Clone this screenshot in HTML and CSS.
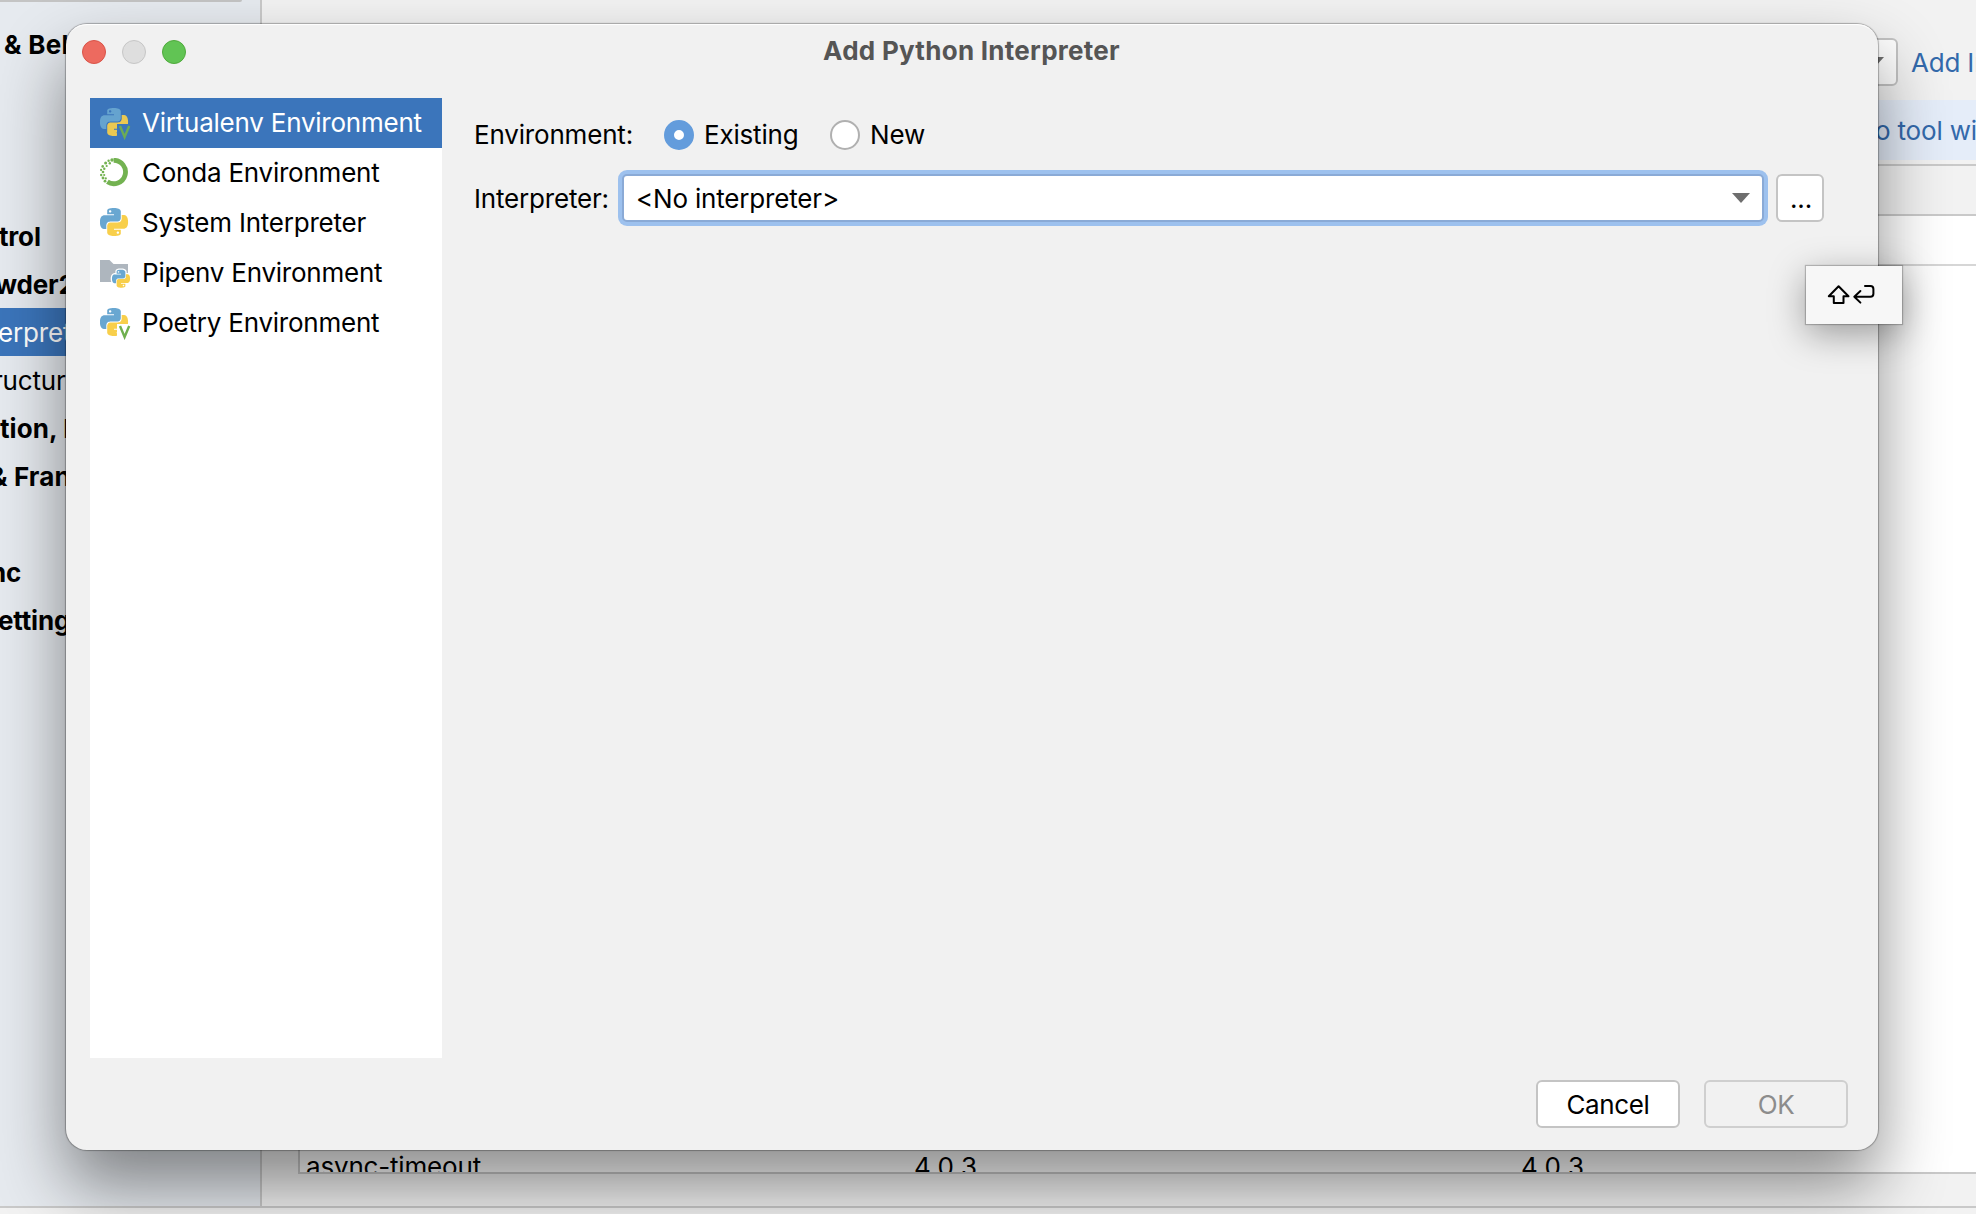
FILE: index.html
```html
<!DOCTYPE html>
<html lang="en">
<head>
<meta charset="utf-8">
<title>Add Python Interpreter</title>
<link rel="stylesheet" href="styles.css">
</head>
<body>
<svg class="defs" aria-hidden="true">
  <defs>
    <path id="snake" d="M14.25.18l.9.2.73.26.59.3.45.32.34.34.25.34.16.33.1.3.04.26.02.2-.01.13V8.5l-.05.63-.13.55-.21.46-.26.38-.3.31-.33.25-.35.19-.35.14-.33.1-.3.07-.26.04-.21.02H8.77l-.69.05-.59.14-.5.22-.41.27-.33.32-.27.35-.2.36-.15.37-.1.35-.07.32-.04.27-.02.21v3.06H3.17l-.21-.03-.28-.07-.32-.12-.35-.18-.36-.26-.36-.36-.35-.46-.32-.59-.28-.73-.21-.88-.14-1.05-.05-1.23.06-1.22.16-1.04.24-.87.32-.71.36-.57.4-.44.42-.33.42-.24.4-.16.36-.1.32-.05.24-.01h.16l.06.01h8.16v-.83H6.18l-.01-2.75-.02-.37.05-.34.11-.31.17-.28.25-.26.31-.23.38-.2.44-.18.51-.15.58-.12.64-.1.71-.06.77-.04.84-.02 1.27.05zm-6.3 1.98l-.23.33-.08.41.08.41.23.34.33.22.41.09.41-.09.33-.22.23-.34.08-.41-.08-.41-.23-.33-.33-.22-.41-.09-.41.09z"/>
    <g id="python">
      <use href="#snake" class="blue"/>
      <use href="#snake" class="yellow" transform="rotate(180 12 12)"/>
    </g>
    <clipPath id="badge-cut"><path d="M0 0H30V16H17V28H0z"/></clipPath>
    <g id="venv">
      <g clip-path="url(#badge-cut)"><use href="#python" transform="scale(1.1667)"/></g>
      <path d="M20 18L24.6 29L29.2 18" class="vee"/>
    </g>
  </defs>
</svg>

<div class="settings">
  <div class="columns">
    <aside class="sidebar">
      <div class="search"></div>
      <div class="node bold n-behavior">&amp; Beh</div>
      <div class="node"></div>
      <div class="node"></div>
      <div class="node"></div>
      <div class="node bold n-control">trol</div>
      <div class="node bold n-project">wder2</div>
      <div class="node active n-interpreter">erpret</div>
      <div class="node n-structure">ructur</div>
      <div class="node bold n-execution">tion, D</div>
      <div class="node bold n-frameworks">&amp; Fran</div>
      <div class="node"></div>
      <div class="node bold n-sync">nc</div>
      <div class="node bold n-settings">etting</div>
    </aside>
    <main class="content">
      <div class="picker">
        <div class="picker-combo"><svg width="18" height="10"><path d="M0 0H18L9 10z" fill="#6e6e6e"/></svg></div>
        <span class="link">Add In</span>
      </div>
      <div class="banner">o tool wi</div>
      <div class="table">
        <div class="table-head"></div>
        <div class="table-row first"></div>
        <div class="table-space"></div>
        <div class="table-row last"><span>async-timeout</span><span class="version">4.0.3</span><span class="version">4.0.3</span></div>
      </div>
    </main>
  </div>
  <div class="footer"></div>
</div>

<div class="dialog">
  <header class="titlebar">
    <div class="lights"><i class="red"></i><i class="gray"></i><i class="green"></i></div>
    <h1>Add Python Interpreter</h1>
  </header>
  <div class="body">
    <ul class="kinds">
      <li class="selected"><svg class="icon" viewBox="0 0 32 32"><use href="#venv"/></svg>Virtualenv Environment</li>
      <li><svg class="icon" viewBox="0 0 32 32">
        <path d="M13.6 2.3A11.7 11.7 0 1 1 7.4 23.8" fill="none" stroke="#73b251" stroke-width="4.8"/>
        <g fill="#73b251"><circle cx="12" cy="2" r="1.7"/><circle cx="8.6" cy="2.8" r="1.2"/><circle cx="9.8" cy="5.2" r="1.2"/><circle cx="5.6" cy="5" r="1.5"/><circle cx="6.7" cy="8" r="1.1"/><circle cx="2.7" cy="8.4" r="1.3"/><circle cx="4.3" cy="10.8" r="1.2"/><circle cx="1.1" cy="11.9" r="1.1"/><circle cx="3" cy="14" r="1.3"/><circle cx="1.2" cy="17" r="1.2"/><circle cx="4.2" cy="17" r="1.1"/><circle cx="3" cy="20" r="1.4"/><circle cx="5.8" cy="20.4" r="1.1"/><circle cx="5" cy="23.2" r="1.4"/></g>
      </svg>Conda Environment</li>
      <li><svg class="icon" viewBox="0 0 32 32"><use href="#python" transform="scale(1.1667)"/></svg>System Interpreter</li>
      <li><svg class="icon" viewBox="0 0 32 32">
        <path d="M0 2H9.5L13.5 6H28V24H0z" fill="#aeb6be"/>
        <g transform="translate(12 11.7) scale(.75)"><g class="halo"><use href="#snake"/><use href="#snake" transform="rotate(180 12 12)"/></g><use href="#python"/></g>
      </svg>Pipenv Environment</li>
      <li><svg class="icon" viewBox="0 0 32 32"><use href="#venv"/></svg>Poetry Environment</li>
    </ul>
    <div class="form">
      <div class="row env">
        <span class="label">Environment:</span>
        <span class="radio on"></span><span class="existing">Existing</span>
        <span class="radio"></span><span class="new">New</span>
      </div>
      <div class="row interp">
        <span class="label">Interpreter:</span>
        <div class="combo"><span>&lt;No interpreter&gt;</span><svg width="18" height="10"><path d="M0 0H18L9 10z" fill="#6e6e6e"/></svg></div>
        <button class="more">...</button>
      </div>
    </div>
  </div>
  <footer class="buttons"><button>Cancel</button><button disabled>OK</button></footer>
</div>

<div class="tooltip">
  <svg width="50" height="22" viewBox="0 0 50 22" fill="none" stroke="#000" stroke-width="2" stroke-linejoin="round" stroke-linecap="round">
    <path d="M11.6 2.2L21.5 12.2H16.5V19H6.8V12.2H1.8z"/>
    <path d="M38 2H43.4Q46.4 2 46.4 5V9.8Q46.4 12.8 43.4 12.8H27.3M33.4 7L27.3 12.8L33.4 18.6"/>
  </svg>
</div>
</body>
</html>
```
FILE: styles.css
```css
* { box-sizing: border-box; }
body {
  margin: 0;
  width: 1976px;
  height: 1214px;
  overflow: hidden;
  position: relative;
  font: 400 26px/32px Inter, "Liberation Sans", sans-serif;
  letter-spacing: -0.18px;
  color: #000;
}
.defs { position: absolute; width: 0; height: 0; }
.blue { fill: #69a7d1; }
.yellow { fill: #f8cf4b; }
.vee { fill: none; stroke: #6fb04f; stroke-width: 2.4; }

/* Settings window behind the dialog */
.settings { height: 1214px; display: flex; flex-direction: column; background: #f2f2f2; }
.columns { height: 1206px; display: flex; }
.footer { flex: 1; border-top: 2px solid #c9c9c9; }
.sidebar { width: 262px; background: #e6eaef; border-right: 2px solid #c9c9c9; overflow: hidden; }
.search { height: 2px; width: 242px; margin-bottom: 18px; background: #c4c4c4; border-bottom-right-radius: 3px; }
.node { height: 48px; line-height: 50px; white-space: nowrap; }
.bold { font-weight: 700; }
.active { background: #3b75bb; color: #fff; }
.n-behavior { padding-left: 4px; letter-spacing: .3px; }
.n-control { text-indent: -1px; }
.n-project { text-indent: -5px; }
.n-interpreter { text-indent: -2px; }
.n-structure { text-indent: -7px; }
.n-execution { text-indent: 0; letter-spacing: .1px; }
.n-frameworks { text-indent: -10px; letter-spacing: .15px; }
.n-sync { text-indent: -10px; }
.n-settings { text-indent: -2px; }

.content { flex: 1; min-width: 0; overflow: hidden; padding-top: 38px; white-space: nowrap; }
.picker { display: flex; height: 48px; align-items: center; gap: 13px; color: #3369ab; }
.picker-combo {
  flex: none; width: 1336px; height: 48px; margin-left: 300px;
  display: flex; align-items: center; justify-content: flex-end; padding-right: 12px;
  border: 2px solid #c4c4c4; border-radius: 6px; background: #fff;
}
.link { padding-top: 2px; }
.banner { margin-top: 14px; height: 60px; line-height: 61px; padding-left: 1613px; background: #e5edf9; color: #3369ab; }
.table { margin: 4px 0 0 36px; height: 1010px; border: solid #c9c9c9; border-width: 2px 0 2px 2px; background: #fff; display: flex; flex-direction: column; overflow: hidden; }
.table-head { height: 50px; background: #f2f2f2; border-bottom: 2px solid #c9c9c9; }
.table-row.first { height: 50px; border-bottom: 2px solid #d6d6d6; }
.table-space { height: 885px; flex: none; }
.table-row.last { height: 21px; line-height: 32px; display: grid; grid-template-columns: 608px 607px 1fr; padding-left: 6px; overflow: hidden; }
.version { letter-spacing: .4px; }

/* Dialog */
.dialog {
  position: absolute; left: 66px; top: 24px; width: 1812px; height: 1126px;
  display: flex; flex-direction: column;
  background: #f1f1f1; border-radius: 21px;
  box-shadow: 0 0 1px 1px rgba(0,0,0,.28), 0 36px 68px rgba(0,0,0,.45), inset 0 2px 1px -1px #fff;
}
.titlebar { height: 74px; display: grid; grid-template-columns: 200px 1fr 200px; padding: 0 0 0 16px; }
.lights { display: flex; gap: 16px; padding-top: 16px; }
.lights i { width: 24px; height: 24px; border-radius: 50%; border: 1px solid; }
.lights .red { background: #ed6a5f; border-color: #d95348; }
.lights .gray { background: #dedede; border-color: #c6c6c6; }
.lights .green { background: #61c454; border-color: #4faa3c; }
.titlebar h1 { margin: 10px 0 0; padding-right: 17px; font-size: 26px; line-height: 33px; font-weight: 700; letter-spacing: .27px; color: #555; text-align: center; }
.body { height: 960px; display: flex; padding-left: 24px; }
.kinds { margin: 0; padding: 0; width: 352px; background: #fff; list-style: none; letter-spacing: -.23px; }
.kinds li { height: 50px; display: flex; align-items: center; gap: 10px; padding-left: 10px; white-space: nowrap; }
.kinds .selected { background: #3b75bb; color: #fff; }
.selected .icon { opacity: .93; }
.icon { width: 32px; height: 32px; margin-top: 2px; flex: none; }
.halo { fill: #fff; stroke: #fff; stroke-width: 3.4; stroke-linejoin: round; }
.form { flex: 1; padding-left: 32px; }
.row { display: flex; align-items: center; }
.env { padding-top: 20px; height: 72px; padding-bottom: 20px; }
.label, .existing, .new, .combo span { padding-top: 2px; }
.env .label { width: 190px; }
.radio { width: 30px; height: 30px; margin: 2px 10px 0 0; border: 2px solid #b0b0b0; border-radius: 50%; background: #fff; }
.radio.on { border: 10px solid #639cdc; }
.existing { width: 126px; }
.interp { height: 56px; }
.interp .label { width: 148px; }
.combo {
  width: 1142px; height: 48px; padding: 0 12px;
  display: flex; align-items: center; justify-content: space-between;
  background: #fff; border: 2px solid #8aaad6; border-radius: 5px; box-shadow: 0 0 0 4px #9dc1ee;
}
button { font: inherit; letter-spacing: inherit; color: #000; padding: 2px 0 0; height: 48px; border: 2px solid #c4c4c4; border-radius: 6px; background: #fff; }
.more { width: 48px; margin-left: 12px; padding-left: 2px; }
.buttons { display: flex; justify-content: flex-end; gap: 24px; padding: 22px 30px 0 0; }
.buttons button { width: 144px; letter-spacing: -.35px; }
button:disabled { background: #f1f1f1; border-color: #cfcfcf; color: #8c8c8c; }

.tooltip {
  position: absolute; left: 1806px; top: 266px; width: 96px; height: 58px;
  padding: 18px 0 0 21px; background: #f7f7f7;
  box-shadow: 0 0 1px 1px rgba(0,0,0,.22), 0 10px 36px rgba(0,0,0,.36);
}
.tooltip svg { display: block; }
```
